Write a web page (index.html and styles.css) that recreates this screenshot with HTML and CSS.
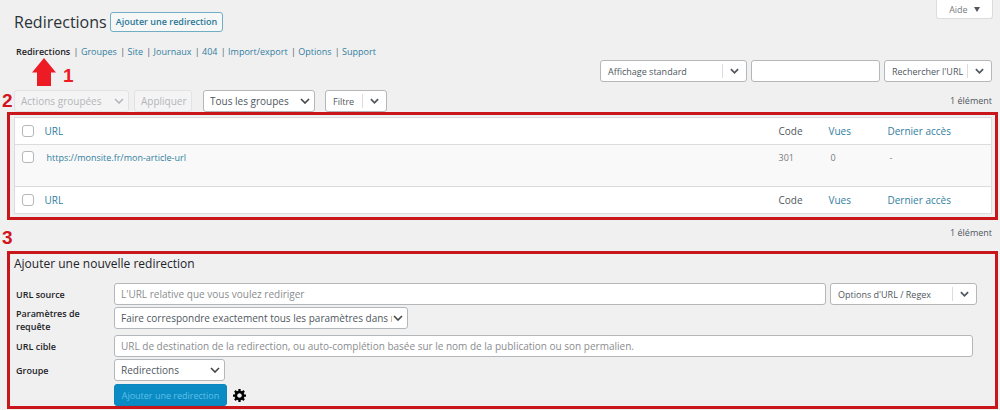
FILE: index.html
```
<!DOCTYPE html>
<html lang="fr">
<head>
  <meta charset="UTF-8">
  <meta name="viewport" content="width=device-width, initial-scale=1.0">
  <title>Redirections</title>
  <link rel="stylesheet" href="styles.css">
</head>
<body>
  <header class="page-header">
    <h1>Redirections</h1>
    <a class="page-title-action" href="#ajouter">Ajouter une redirection</a>
    <button class="help-tab" type="button">Aide <span class="caret"></span></button>
  </header>

  <nav class="subsubsub">
    <a class="current" href="#">Redirections</a> |
    <a href="#">Groupes</a> |
    <a href="#">Site</a> |
    <a href="#">Journaux</a> |
    <a href="#">404</a> |
    <a href="#">Import/export</a> |
    <a href="#">Options</a> |
    <a href="#">Support</a>
    <div class="step step-1">
      <svg width="24" height="28" viewBox="0 0 24 28" aria-hidden="true"><path fill="#ed1c24" d="M12 0 24 14.500H19V28H5V14.500H0z"/></svg>
      <span>1</span>
    </div>
  </nav>

  <div class="search-box">
    <button class="split display" type="button"><span>Affichage standard</span><svg viewBox="0 0 10 6"><path d="M1 1l4 4 4-4"/></svg></button>
    <input class="search-input" type="search" aria-label="Rechercher">
    <button class="split search" type="button"><span>Rechercher l'URL</span><svg viewBox="0 0 10 6"><path d="M1 1l4 4 4-4"/></svg></button>
  </div>

  <div class="tablenav">
    <span class="step step-2">2</span>
    <select class="bulk" aria-label="Actions groupées" disabled>
      <option>Actions groupées</option>
    </select>
    <button class="apply" type="button" disabled>Appliquer</button>
    <select class="groups" aria-label="Groupe affiché">
      <option>Tous les groupes</option>
    </select>
    <button class="split filter" type="button"><span>Filtre</span><svg viewBox="0 0 10 6"><path d="M1 1l4 4 4-4"/></svg></button>
    <span class="count">1 élément</span>
  </div>

  <section class="frame">
    <table>
      <thead>
        <tr>
          <th class="check"><input type="checkbox" aria-label="Tout sélectionner"></th>
          <th><a href="#">URL</a></th>
          <th class="code">Code</th>
          <th class="hits"><a href="#">Vues</a></th>
          <th class="last"><a href="#">Dernier accès</a></th>
        </tr>
      </thead>
      <tbody>
        <tr>
          <td class="check"><input type="checkbox" aria-label="Sélectionner la redirection"></td>
          <td class="url"><a href="#">https://monsite.fr/mon-article-url</a></td>
          <td>301</td>
          <td class="inset">0</td>
          <td class="inset">-</td>
        </tr>
      </tbody>
      <tfoot>
        <tr>
          <th class="check"><input type="checkbox" aria-label="Tout sélectionner"></th>
          <th><a href="#">URL</a></th>
          <th>Code</th>
          <th><a href="#">Vues</a></th>
          <th><a href="#">Dernier accès</a></th>
        </tr>
      </tfoot>
    </table>
  </section>

  <div class="tablenav bottom">
    <span class="step step-3">3</span>
    <span class="count">1 élément</span>
  </div>

  <section class="frame add-new" id="ajouter">
    <h2>Ajouter une nouvelle redirection</h2>
    <form class="edit-form">
      <label for="source">URL source</label>
      <div class="field">
        <input id="source" type="text" placeholder="L'URL relative que vous voulez rediriger">
        <button class="split regex" type="button"><span>Options d'URL / Regex</span><svg viewBox="0 0 10 6"><path d="M1 1l4 4 4-4"/></svg></button>
      </div>

      <label for="query">Paramètres de requête</label>
      <div class="field query">
        <select id="query">
          <option>Faire correspondre exactement tous les paramètres dans n'importe quel ordre</option>
        </select>
      </div>

      <label for="target">URL cible</label>
      <div class="field target">
        <input id="target" type="text" placeholder="URL de destination de la redirection, ou auto-complétion basée sur le nom de la publication ou son permalien.">
      </div>

      <label for="group">Groupe</label>
      <div class="field">
        <select id="group" class="group">
          <option>Redirections</option>
        </select>
      </div>

      <div class="field submit">
        <button class="primary" type="submit">Ajouter une redirection</button>
        <button class="gear" type="button" aria-label="Options avancées">
          <svg width="13" height="13" viewBox="1 2 17 17"><path d="M18 12h-2.180c-.17.700-.440 1.350-.810 1.930l1.540 1.540-2.100 2.100-1.540-1.540c-.580.360-1.230.630-1.910.790V19H8v-2.180c-.680-.160-1.330-.430-1.910-.790l-1.540 1.540-2.120-2.120 1.540-1.540c-.360-.580-.630-1.230-.790-1.910H1V9.030h2.170c.160-.700.440-1.350.800-1.940L2.430 5.550l2.100-2.100 1.540 1.540c.580-.370 1.240-.640 1.930-.810V2h3v2.180c.680.160 1.330.430 1.910.790l1.540-1.540 2.120 2.120-1.540 1.540c.360.590.640 1.240.800 1.940H18V12zm-8.500 1.500c1.660 0 3-1.340 3-3s-1.340-3-3-3-3 1.340-3 3 1.340 3 3 3z"/></svg>
        </button>
      </div>
    </form>
  </section>
</body>
</html>
```
FILE: styles.css
```
* {
  box-sizing: border-box;
}
body {
  margin: 0;
  background: #f0f0f1;
  color: #50575e;
  font-family: "Open Sans", "Noto Sans", sans-serif;
  font-size: 9px;
  line-height: 14px;
}
a {
  color: #327ea0;
  text-decoration: none;
}
input, select, button {
  height: 22px;
  margin: 0;
  border: 1px solid #b4b7ba;
  border-radius: 3px;
  background: #fff;
  color: #50575e;
  font-family: inherit;
  font-size: 10px;
}
input[type="text"], input[type="search"] {
  min-width: 0;
  padding: 0 6px;
}
input::placeholder {
  color: #8a8c8f;
}
input[type="checkbox"] {
  appearance: none;
  display: block;
  width: 12px;
  height: 12px;
}
select {
  appearance: none;
  padding: 0 15px 0 6px;
  background: #fff url("data:image/svg+xml,%3Csvg xmlns='http://www.w3.org/2000/svg' width='10' height='6'%3E%3Cpath d='M1 1l4 4 4-4' fill='none' stroke='%23444' stroke-width='1.600'/%3E%3C/svg%3E") no-repeat right 4px center;
}
select:disabled, button:disabled {
  border-color: #e2e2e4;
  background-color: #f4f4f5;
  color: #b4b6b9;
  opacity: 1;
}
select:disabled {
  background-image: url("data:image/svg+xml,%3Csvg xmlns='http://www.w3.org/2000/svg' width='10' height='6'%3E%3Cpath d='M1 1l4 4 4-4' fill='none' stroke='%23b4b6b9' stroke-width='1.600'/%3E%3C/svg%3E");
}

/* Header */
.page-header {
  display: flex;
  align-items: flex-start;
  padding: 0 7px 0 14px;
}
h1 {
  margin: 10px 3px 0 0;
  color: #2c3338;
  font-size: 16px;
  font-weight: 400;
  line-height: 24px;
}
.page-title-action {
  margin-top: 12px;
  padding: 2px 5px;
  border: 1px solid #71aec6;
  border-radius: 3px;
  background: #f6f7f7;
  color: #2a7897;
  font-weight: 600;
}
.help-tab {
  height: 19px;
  margin-left: auto;
  padding: 0 12px;
  border: 1px solid #dcdcde;
  border-top: 0;
  border-radius: 0 0 3px 3px;
  color: #787c82;
  font-size: 9px;
}
.caret {
  display: inline-block;
  margin-left: 4px;
  border: 3px solid transparent;
  border-top: 5px solid #50575e;
  border-bottom: 0;
  vertical-align: 1px;
}
.subsubsub {
  position: relative;
  margin: 11px 0 0 16px;
}
.subsubsub a {
  margin-right: 1px;
}
.subsubsub .current {
  color: #1d2327;
  font-weight: 600;
}

/* Numbered annotations */
.step {
  position: absolute;
  color: #d0161c;
  font: bold 19px/20px "Liberation Sans", Arial, sans-serif;
}
.step-1 {
  top: 13px;
  left: 16px;
  display: flex;
  align-items: flex-end;
  gap: 7px;
  color: #ed1c24;
}
.step-2 {
  top: 1px;
  left: 2px;
}
.step-3 {
  top: 8px;
  left: 2px;
}
.frame {
  margin: 0 2px 0 7px;
  border: 3px solid #c8161b;
}

/* Split dropdown buttons */
.split {
  display: flex;
  align-items: center;
  padding: 0;
  font-size: 9px;
}
.split span {
  flex: 1;
  padding-left: 7px;
  text-align: left;
  white-space: nowrap;
}
.split svg {
  flex: none;
  width: 24px;
  height: 14px;
  padding: 4px 7px;
  border-left: 1px solid #dcdcde;
  overflow: visible;
  fill: none;
  stroke: #50575e;
  stroke-width: 2;
}

/* Filters */
.search-box {
  display: flex;
  justify-content: flex-end;
  gap: 4px;
  margin-top: 1px;
  padding: 0 8px;
}
.display {
  width: 147px;
}
.search-input {
  width: 129px;
}
.search {
  width: 108px;
}
.tablenav {
  position: relative;
  display: flex;
  align-items: center;
  margin-top: 8px;
  padding: 0 8px 0 14px;
}
.bulk {
  width: 115px;
  margin-right: 5px;
}
.apply {
  width: 58px;
  margin-right: 11px;
}
.groups {
  width: 112px;
  margin-right: 10px;
}
.filter {
  width: 62px;
}
.count {
  margin-left: auto;
}
.bottom {
  height: 31px;
  margin-top: 0;
  padding-bottom: 5px;
}

/* Table */
.frame table {
  width: calc(100% - 7px);
  margin: 2px 3px 3px 4px;
  border: 1px solid #dcdcde;
  border-collapse: collapse;
  background: #fff;
  table-layout: fixed;
}
th {
  height: 27px;
  padding: 0;
  font-size: 10px;
  font-weight: 400;
  text-align: left;
}
td {
  height: 42px;
  padding: 6px 0;
  color: #787c82;
  vertical-align: top;
}
tbody tr {
  border: solid #dcdcde;
  border-width: 1px 0;
  background: #f9f9f9;
}
.check {
  width: 30px;
  padding-left: 7px;
}
.url {
  padding-left: 2px;
}
.inset {
  padding-left: 2px;
}
.code {
  width: 50px;
}
.hits {
  width: 59px;
}
.last {
  width: 104px;
}

/* Add form */
.add-new {
  padding: 1px 18px 0 4px;
}
h2 {
  margin: 0 0 10px;
  color: #1d2327;
  font-size: 12px;
  font-weight: 500;
  line-height: 18px;
}
.edit-form {
  display: grid;
  grid-template-columns: 85px 1fr;
  column-gap: 15px;
  row-gap: 2px;
  align-items: center;
}
.edit-form label {
  padding-left: 2px;
  color: #1d2327;
  font-weight: 600;
  line-height: 13px;
}
.field {
  display: flex;
  gap: 4px;
}
.field input {
  flex: 1;
}
.regex {
  width: 147px;
}
.query {
  align-self: start;
}
.query select {
  width: 294px;
}
.target {
  padding-right: 4px;
}
.group {
  width: 111px;
}
.submit {
  grid-column: 2;
  align-items: center;
  gap: 6px;
  margin-top: 1px;
}
.primary {
  width: 113px;
  padding: 0;
  border-color: #0a86bd;
  background: #0a8bc4;
  color: #5fc0e6;
  font-size: 9px;
}
.gear {
  display: flex;
  align-items: center;
  border: 0;
  padding: 0;
  background: none;
}
```
